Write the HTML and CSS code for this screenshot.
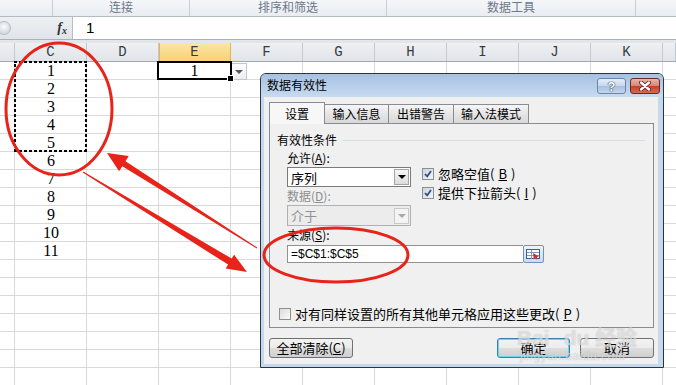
FILE: index.html
```html
<!DOCTYPE html>
<html>
<head>
	<title>数据有效性</title>
	<meta charset="utf-8">
	<link rel="stylesheet" href="styles.css">
</head>
<body>
	<div class="app">
		<div class="ribbon">
			<div class="group g0"></div>
			<div class="group g1">连接</div>
			<div class="group g2">排序和筛选</div>
			<div class="group g3">数据工具</div>
			<div class="group g4"></div>
		</div>
		<div class="formula">
			<div class="namebox">
				<span class="grip"></span>
				<span class="fx">f<i>x</i></span>
			</div>
			<div class="entry">1</div>
		</div>
		<div class="gap"></div>
		<div class="heads">
			<div class="hd"></div>
			<div class="hd">C</div>
			<div class="hd">D</div>
			<div class="hd active">E</div>
			<div class="hd">F</div>
			<div class="hd">G</div>
			<div class="hd">H</div>
			<div class="hd">I</div>
			<div class="hd">J</div>
			<div class="hd">K</div>
			<div class="hd"></div>
		</div>
		<div class="sheet">
			<div class="col-c">
				<div>1</div>
				<div>2</div>
				<div>3</div>
				<div>4</div>
				<div>5</div>
				<div>6</div>
				<div>7</div>
				<div>8</div>
				<div>9</div>
				<div>10</div>
				<div>11</div>
			</div>
			<div class="marquee"></div>
			<div class="cell-e1">1</div>
			<div class="dd-btn"><span class="tri"></span></div>
		</div>

		<div class="dialog">
			<div class="titlebar">
				<div class="title">数据有效性</div>
				<div class="tbtn help">?</div>
				<div class="tbtn close">
					<svg width="14" height="10" viewBox="0 0 14 10">
						<path d="M3 1.5L11 8.5M11 1.5L3 8.5" stroke="#5a1a12" stroke-width="4" stroke-linecap="round"/>
						<path d="M3 1.5L11 8.5M11 1.5L3 8.5" stroke="#fff" stroke-width="2.4" stroke-linecap="round"/>
					</svg>
				</div>
			</div>
			<div class="body">
				<div class="tabs">
					<div class="tab current">设置</div>
					<div class="tab t2">输入信息</div>
					<div class="tab t3">出错警告</div>
					<div class="tab t4">输入法模式</div>
				</div>
				<div class="panel">
					<div class="legend">有效性条件</div>
					<div class="form">
						<div class="lbl">允许(<u>A</u>):</div>
						<div class="select">
							<span>序列</span>
							<span class="arrow"><span class="tri"></span></span>
						</div>
						<div class="checks">
							<div class="chk-row"><span class="chk on"></span>忽略空值(<u>B</u>)</div>
							<div class="chk-row"><span class="chk on"></span>提供下拉箭头(<u>I</u>)</div>
						</div>
						<div class="lbl off">数据(<u>D</u>):</div>
						<div class="select disabled">
							<span>介于</span>
							<span class="arrow"><span class="tri"></span></span>
						</div>
						<div class="lbl">来源(<u>S</u>):</div>
						<div class="source">
							<div class="src-input">=$C$1:$C$5</div>
							<div class="ref-btn">
								<svg width="15" height="11" viewBox="0 0 15 11">
									<rect x="0.5" y="0.5" width="13" height="9" fill="#fff" stroke="#3d5d8a"/>
									<path d="M1 3.5h12M1 6.5h12M5.5 1v9" stroke="#7f9cc2"/>
									<path d="M7 4l6 3.5-2.3 0.4 1.3 2.1-1.2 0.6-1.3-2.1-1.7 1.4z" fill="#d8281a"/>
								</svg>
							</div>
						</div>
					</div>
					<div class="apply"><span class="chk"></span>对有同样设置的所有其他单元格应用这些更改(<u>P</u>)</div>
				</div>
				<div class="buttons">
					<div class="btn">全部清除(<u>C</u>)</div>
					<div class="spacer"></div>
					<div class="btn ok">确定</div>
					<div class="btn cancel">取消</div>
				</div>
			</div>
		</div>

		<div class="watermark">
			<div class="wm-logo">Bai<span class="wm-du">du</span> 经验</div>
			<div class="wm-url">jingyan.baidu.com</div>
		</div>

		<svg class="marks" width="676" height="385" viewBox="0 0 676 385">
			<ellipse cx="59" cy="109" rx="53" ry="66" fill="none" stroke="#e8231a" stroke-width="3"/>
			<ellipse cx="336" cy="255" rx="72" ry="27" fill="none" stroke="#e8231a" stroke-width="3"/>
			<polygon fill="#e8231a" points="257.3,247.6 125.5,161.2 128.7,156.1 107,153 119.1,171.3 122.3,166.2 256.7,248.4"/>
			<polygon fill="#e8231a" points="83.3,171.6 231.7,258.6 234.1,254.8 247,272 225.7,268.4 228.1,264.6 82.7,172.4"/>
		</svg>
	</div>
</body>
</html>
```

FILE: styles.css
```css
body {
	margin: 0;
}
.app {
	position: relative;
	width: 676px;
	height: 385px;
	overflow: hidden;
	background: #fff;
	font-family: "Noto Sans CJK SC", sans-serif;
	font-size: 12px;
	color: #000;
}

/* ribbon + formula bar */
.ribbon {
	display: flex;
	height: 16px;
	border-bottom: 1px solid #b4bbc5;
	background: linear-gradient(#f4f6f9, #e9edf2);
	color: #6d7889;
}
.group {
	box-sizing: border-box;
	border-right: 1px solid #c8ced7;
	text-align: center;
	line-height: 13px;
}
.g0 { width: 53px; }
.g1 { width: 137px; }
.g2 { width: 197px; }
.g3 { width: 249px; }
.g4 { flex: 1; border-right: 0; }

.formula {
	display: flex;
	height: 22px;
	border-bottom: 1px solid #a9b1bc;
}
.namebox {
	box-sizing: border-box;
	width: 73px;
	display: flex;
	align-items: center;
	justify-content: space-between;
	padding-right: 5px;
	background: linear-gradient(#eef0f3, #e0e4e9);
	border-right: 1px solid #b7bec8;
}
.grip {
	width: 12px;
	height: 12px;
	margin-left: -3px;
	border-radius: 50%;
	background: radial-gradient(circle at 50% 40%, #fafbfc, #c6ccd4);
	border: 1px solid #b5bcc6;
}
.fx {
	font-family: "Liberation Serif", serif;
	font-style: italic;
	font-weight: bold;
	font-size: 14px;
	color: #333;
}
.fx i {
	font-size: 10px;
	position: relative;
	top: 2px;
}
.entry {
	flex: 1;
	padding-left: 13px;
	font-family: "Liberation Sans", sans-serif;
	font-size: 15px;
	line-height: 22px;
}
.gap {
	height: 3px;
	background: #e2e6eb;
}

/* sheet */
.heads {
	display: grid;
	grid-template-columns: 15px repeat(9, 72px) 1fr;
	height: 19px;
	box-sizing: border-box;
	border-bottom: 1px solid #9fa7b2;
	background: linear-gradient(#eef0f3, #e1e4e9);
}
.hd {
	border-right: 1px solid #c3c8d0;
	text-align: center;
	font-family: "Liberation Mono", monospace;
	font-size: 14px;
	line-height: 18px;
	color: #3b3b3b;
}
.hd.active {
	background: linear-gradient(#fbe6a6, #f8d173);
	border-right-color: #e3b35a;
	box-shadow: inset 1px 0 #e3b35a, 0 1px #e8a93b;
}
.sheet {
	display: grid;
	grid-template-columns: 15px repeat(9, 72px) 1fr;
	grid-template-rows: repeat(18, 18px);
	background:
		linear-gradient(to right, #d9d9d9 1px, transparent 1px) 14px 0 / 72px 100%,
		linear-gradient(to bottom, transparent 17px, #d9d9d9 17px) 0 0 / 100% 18px;
	font-family: "Liberation Serif", serif;
	font-size: 16px;
}
.col-c {
	grid-column: 2;
	grid-row: 1 / 12;
	display: grid;
	grid-auto-rows: 18px;
	text-align: center;
	line-height: 18px;
}
.marquee {
	grid-column: 2;
	grid-row: 1 / 6;
	margin: -1px 0 0 -1px;
	background:
		repeating-linear-gradient(90deg, #000 0 3px, transparent 3px 5px) top / 100% 2px no-repeat,
		repeating-linear-gradient(90deg, #000 0 3px, transparent 3px 5px) bottom / 100% 2px no-repeat,
		repeating-linear-gradient(0deg, #000 0 3px, transparent 3px 5px) left / 2px 100% no-repeat,
		repeating-linear-gradient(0deg, #000 0 3px, transparent 3px 5px) right / 2px 100% no-repeat;
}
.cell-e1 {
	grid-column: 4;
	grid-row: 1;
	position: relative;
	margin: -1px -1px 0 -2px;
	border: 2px solid #000;
	text-align: center;
	line-height: 15px;
	background: #fff;
}
.cell-e1::after {
	content: "";
	position: absolute;
	right: -4px;
	bottom: -4px;
	width: 5px;
	height: 5px;
	background: #000;
	border: 1px solid #fff;
}
.dd-btn {
	grid-column: 5;
	grid-row: 1;
	width: 16px;
	height: 17px;
	margin-top: 1px;
	box-sizing: border-box;
	border: 1px solid #c4c7cc;
	background: linear-gradient(#fdfdfd, #eceef1);
	display: flex;
	align-items: center;
	justify-content: center;
}
.tri {
	width: 0;
	height: 0;
	border-left: 4px solid transparent;
	border-right: 4px solid transparent;
	border-top: 4px solid #555;
}

/* dialog */
.dialog {
	position: absolute;
	left: 260px;
	top: 73px;
	width: 404px;
	height: 295px;
	box-sizing: border-box;
	border: 1px solid #2e343c;
	border-radius: 6px 6px 0 0;
	background: #c4d8ee;
	display: flex;
	flex-direction: column;
}
.titlebar {
	height: 23px;
	display: flex;
	align-items: flex-start;
	padding: 4px 3px 0 6px;
	box-sizing: border-box;
	background: linear-gradient(#a6c1e2, #c7dbf0);
	border-radius: 5px 5px 0 0;
}
.title {
	flex: 1;
	line-height: 16px;
	margin-top: -1px;
}
.tbtn {
	height: 16px;
	box-sizing: border-box;
	border-radius: 3px;
	display: flex;
	align-items: center;
	justify-content: center;
}
.help {
	width: 29px;
	border: 1px solid #6c85a7;
	background: linear-gradient(#e6eef8, #c7d7ec 50%, #a8bfdd 51%, #c3d6ed);
	font-family: "Liberation Sans", sans-serif;
	font-weight: bold;
	font-size: 13px;
	color: #fff;
	text-shadow: 0 0 1px #34465f, 0 0 1px #34465f, 0 0 1px #34465f;
}
.close {
	width: 30px;
	margin-left: 4px;
	border: 1px solid #6b2a21;
	background: linear-gradient(#eab3a7, #d88572 50%, #c1412b 51%, #d46c52);
}
.body {
	flex: 1;
	margin: 0 5px 3px 3px;
	padding: 5px 4px 0 5px;
	background: #f0f0f0;
}
.tabs {
	display: flex;
	align-items: flex-end;
	height: 21px;
	position: relative;
	z-index: 1;
}
.tab {
	box-sizing: border-box;
	height: 19px;
	border: 1px solid #898c95;
	border-bottom: 0;
	background: linear-gradient(#f6f6f6, #e2e2e2 60%, #d8d8d8);
	text-align: center;
	line-height: 17px;
	margin-left: -1px;
}
.tab.current {
	width: 56px;
	height: 22px;
	margin: 0 0 -1px 0;
	background: #f7f7f7;
	line-height: 21px;
}
.t2 { width: 65px; }
.t3 { width: 66px; }
.t4 { width: 76px; }
.panel {
	box-sizing: border-box;
	height: 205px;
	border: 1px solid #898c95;
	background: #f0f0f0;
}
.legend {
	display: flex;
	align-items: center;
	margin: 9px 8px 0 7px;
	line-height: 14px;
}
.legend::after {
	content: "";
	flex: 1;
	height: 1px;
	margin-left: 6px;
	background: #d5dde4;
}
.form {
	display: grid;
	grid-template-columns: 124px 1fr;
	grid-template-rows: 18px 20px 18px 21px 18px 18px;
	column-gap: 11px;
	margin-top: 2px;
	padding-left: 17px;
}
.lbl {
	grid-column: 1;
	line-height: 18px;
}
.lbl.off {
	color: #8d8d8d;
}
.select {
	grid-column: 1;
	box-sizing: border-box;
	display: flex;
	align-items: center;
	justify-content: space-between;
	border: 1px solid #7b7b7b;
	background: #fff;
	padding: 0 1px 0 3px;
	font-size: 13px;
}
.select .arrow {
	box-sizing: border-box;
	width: 15px;
	height: 16px;
	display: flex;
	align-items: center;
	justify-content: center;
	border: 1px solid #a5a5a5;
	background: linear-gradient(#f7f7f7, #dcdcdc);
}
.select .tri {
	border-top-color: #000;
}
.select.disabled {
	border-color: #aeb2b5;
	background: #ececec;
	color: #939393;
}
.select.disabled .arrow {
	border-color: #c8c8c8;
	background: #f4f4f4;
}
.select.disabled .tri {
	border-top-color: #a9a9a9;
}
.checks {
	grid-column: 2;
	grid-row: 2 / 4;
	margin-top: -3px;
	font-size: 13px;
}
.chk-row {
	display: flex;
	align-items: center;
	gap: 4px;
	height: 19px;
}
.chk {
	box-sizing: border-box;
	width: 12px;
	height: 12px;
	border: 1px solid #8e8f8f;
	background: linear-gradient(135deg, #dcdcdc, #fbfbfb);
}
.chk.on {
	background:
		url("data:image/svg+xml;utf8,<svg xmlns='http://www.w3.org/2000/svg' width='10' height='10'><path d='M2 5l2.2 2.4L8 2' fill='none' stroke='%23314c80' stroke-width='1.8'/></svg>") center no-repeat,
		linear-gradient(135deg, #c9d3e2, #f4f7fb);
}
.source {
	grid-column: 1 / -1;
	grid-row: 6;
	display: flex;
	margin-top: 1px;
	height: 18px;
}
.src-input {
	box-sizing: border-box;
	width: 236px;
	border: 1px solid #8f9194;
	border-right: 0;
	background: #fff;
	padding-left: 3px;
	font-family: "Liberation Sans", sans-serif;
	font-size: 12px;
	line-height: 16px;
}
.ref-btn {
	box-sizing: border-box;
	width: 21px;
	border: 1px solid #6f93c0;
	border-radius: 2px;
	background: linear-gradient(#eef4fb, #c8dbf0);
	display: flex;
	align-items: center;
	justify-content: center;
}
.apply {
	display: flex;
	align-items: center;
	gap: 4px;
	margin-top: 43px;
	padding-left: 9px;
	line-height: 18px;
	font-size: 13px;
}
.buttons {
	display: flex;
	margin-top: 10px;
}
.spacer {
	flex: 1;
}
.btn {
	box-sizing: border-box;
	width: 84px;
	height: 20px;
	border: 1px solid #707070;
	border-radius: 3px;
	background: linear-gradient(#f3f3f3, #ebebeb 50%, #dddddd 51%, #cfcfcf);
	text-align: center;
	line-height: 18px;
	font-size: 13px;
}
.btn.ok {
	width: 73px;
	border-color: #3c7fb1;
	box-shadow: inset 0 0 0 1px #6fd3f7;
}
.btn.cancel {
	width: 74px;
	margin-left: 10px;
}

/* overlays */
.watermark {
	position: absolute;
	left: 517px;
	top: 326px;
	color: rgba(255, 255, 255, 0.55);
	text-shadow: 0 0 1px rgba(110, 110, 110, 0.45);
	pointer-events: none;
}
.wm-logo {
	font-family: "Liberation Sans", "Noto Sans CJK SC", sans-serif;
	font-weight: bold;
	font-size: 21px;
	line-height: 24px;
}
.wm-du {
	margin-left: 14px;
}
.wm-url {
	font-family: "Liberation Sans", sans-serif;
	font-size: 12px;
	line-height: 12px;
	margin-left: 3px;
	letter-spacing: 0.5px;
}
.marks {
	position: absolute;
	left: 0;
	top: 0;
	pointer-events: none;
}
```
